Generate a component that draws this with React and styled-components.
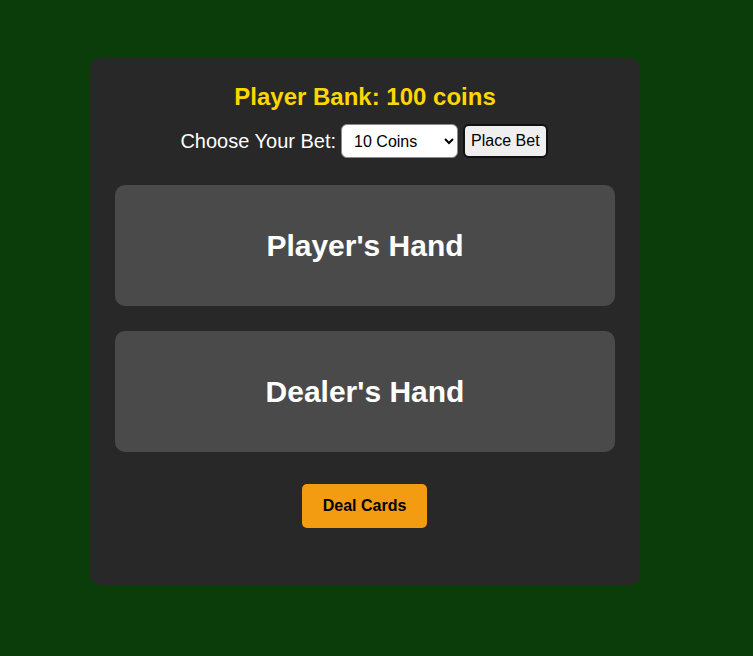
import styled, { createGlobalStyle } from "styled-components";

const GlobalStyle = createGlobalStyle`
  html, body {
    margin: 0;
    background: #0b3d0b;
    font-family: Arial, "Liberation Sans", sans-serif;
  }
`;

const Page = styled.div`
  min-height: 656px;
  padding: 58px 0 0 90px;
  box-sizing: border-box;
`;

const Table = styled.div`
  width: 550px;
  height: 527px;
  box-sizing: border-box;
  padding: 25px;
  background: #282828;
  border-radius: 10px;
  display: flex;
  flex-direction: column;
  align-items: center;
  color: #fff;
`;

const Bank = styled.div`
  font-size: 24px;
  font-weight: bold;
  color: #ffd700;
  line-height: 28px;
`;

const BetRow = styled.div`
  margin-top: 13px;
  margin-right: 2px;
  display: flex;
  align-items: center;
  gap: 5px;
  font-size: 20px;
`;

const Select = styled.select`
  height: 34px;
  width: 117px;
  padding: 0 4px 0 8px;
  font-size: 16px;
  font-family: inherit;
  border: 1px solid #8a8a8a;
  border-radius: 6px;
  background: #fff;
  color: #000;
`;

const BetButton = styled.button`
  height: 34px;
  padding: 0 6px;
  font-size: 16px;
  font-family: inherit;
  color: #000;
  background: #efefef;
  border: 2px solid #111;
  border-radius: 6px;
`;

const Hands = styled.div`
  margin-top: 27px;
  width: 100%;
  display: flex;
  flex-direction: column;
  gap: 25px;
`;

const Hand = styled.div`
  height: 121px;
  border-radius: 10px;
  background: #4a4a4a;
  display: flex;
  align-items: center;
  justify-content: center;
`;

const HandTitle = styled.h2`
  margin: 0;
  font-size: 30px;
  font-weight: bold;
  color: #fff;
`;

const DealButton = styled.button`
  margin-top: 32px;
  margin-right: 1px;
  width: 125px;
  height: 44px;
  border: none;
  border-radius: 5px;
  background: #f39c12;
  color: #000;
  font-family: inherit;
  font-size: 16px;
  font-weight: bold;
`;

export default function App() {
  return (
    <>
      <GlobalStyle />
      <Page>
        <Table>
          <Bank>Player Bank: 100 coins</Bank>
          <BetRow>
            Choose Your Bet:
            <Select defaultValue="10">
              <option value="10">10 Coins</option>
              <option value="20">20 Coins</option>
              <option value="50">50 Coins</option>
            </Select>
            <BetButton>Place Bet</BetButton>
          </BetRow>
          <Hands>
            <Hand>
              <HandTitle>Player's Hand</HandTitle>
            </Hand>
            <Hand>
              <HandTitle>Dealer's Hand</HandTitle>
            </Hand>
          </Hands>
          <DealButton>Deal Cards</DealButton>
        </Table>
      </Page>
    </>
  );
}
